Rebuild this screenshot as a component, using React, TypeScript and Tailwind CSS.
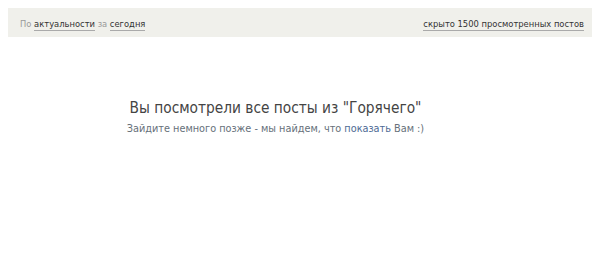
import React from "react";

const font = { fontFamily: '"DejaVu Sans Condensed", "Liberation Sans", Arial, sans-serif' };

export default function App() {
  return (
    <div className="w-[600px] h-[257px] bg-white" style={font}>
      <div className="mx-2 mt-2 h-[29px] bg-[#f0f0eb] flex items-center justify-between pl-3 pr-2 pt-[3px] text-[9.3px]">
        <div className="text-[#999]">
          По{" "}
          <a className="text-[#333] border-b border-[#aaa] leading-[12px] inline-block">актуальности</a>{" "}
          за{" "}
          <a className="text-[#333] border-b border-[#aaa] leading-[12px] inline-block">сегодня</a>
        </div>
        <a className="text-[#333] border-b border-[#aaa] leading-[12px] inline-block">
          скрыто 1500 просмотренных постов
        </a>
      </div>
      <div className="w-[551px] text-center mt-[61px]">
        <div className="text-[15.3px] text-[#444] leading-[20px]">Вы посмотрели все посты из "Горячего"</div>
        <div className="text-[10.8px] text-[#66707a] mt-[3px]">
          Зайдите немного позже - мы найдем, что <span className="text-[#4d6a94]">показать</span> Вам :)
        </div>
      </div>
    </div>
  );
}
